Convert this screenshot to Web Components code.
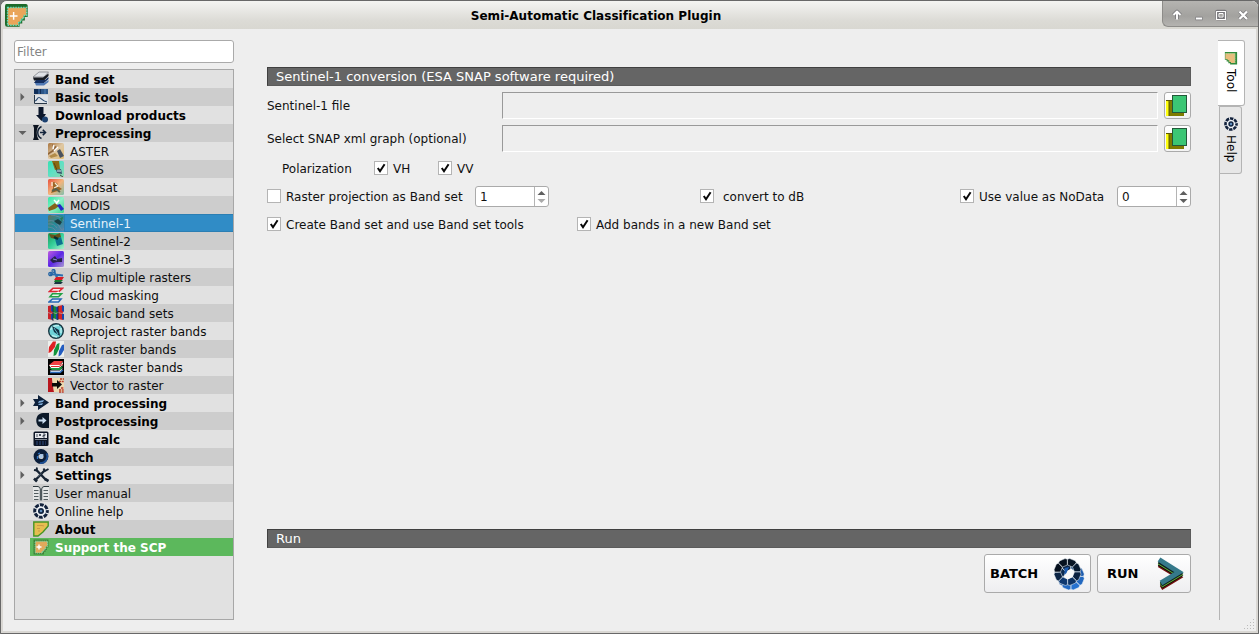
<!DOCTYPE html>
<html lang="en">
<head>
<meta charset="utf-8">
<title>Semi-Automatic Classification Plugin</title>
<style>
html,body{margin:0;height:100%;overflow:hidden;background:#777}
body{font:12px "DejaVu Sans",sans-serif;color:#111}
.content{display:grid;grid-template-columns:220px 924px 28px;column-gap:33px;padding:11px 0 0 10px}
.content scp-tabs{margin-left:-6px}
.side{display:flex;flex-direction:column;gap:6px}
.main{display:flex;flex-direction:column;height:553px;padding-top:27px;box-sizing:border-box}
.pol{display:grid;grid-template-columns:92px 64px auto;padding-left:15px;height:20px;margin-top:6px;line-height:22px}
.opts{display:grid;grid-template-columns:208px 225px 260px 157px 74px;height:21px;margin-top:8px}
.opts2{display:grid;grid-template-columns:310px auto;height:20px;margin-top:7px}
.grow{flex:1}
.actions{display:flex;justify-content:flex-end;gap:6px;margin-top:6px}
</style>
</head>
<body>
<scp-window heading="Semi-Automatic Classification Plugin">
  <div class="content">
    <div class="side">
      <scp-filter></scp-filter>
      <scp-tree>
        <scp-item icon="bandset" bold>Band set</scp-item>
        <scp-item icon="basic" bold fold="closed">Basic tools</scp-item>
        <scp-item icon="download" bold>Download products</scp-item>
        <scp-item icon="pre" bold fold="open">Preprocessing</scp-item>
        <scp-item icon="aster" child>ASTER</scp-item>
        <scp-item icon="goes" child>GOES</scp-item>
        <scp-item icon="landsat" child>Landsat</scp-item>
        <scp-item icon="modis" child>MODIS</scp-item>
        <scp-item icon="s1" child selected>Sentinel-1</scp-item>
        <scp-item icon="s2" child>Sentinel-2</scp-item>
        <scp-item icon="s3" child>Sentinel-3</scp-item>
        <scp-item icon="clip" child>Clip multiple rasters</scp-item>
        <scp-item icon="cloud" child>Cloud masking</scp-item>
        <scp-item icon="mosaic" child>Mosaic band sets</scp-item>
        <scp-item icon="reproject" child>Reproject raster bands</scp-item>
        <scp-item icon="split" child>Split raster bands</scp-item>
        <scp-item icon="stack" child>Stack raster bands</scp-item>
        <scp-item icon="vector" child>Vector to raster</scp-item>
        <scp-item icon="bandproc" bold fold="closed">Band processing</scp-item>
        <scp-item icon="post" bold fold="closed">Postprocessing</scp-item>
        <scp-item icon="calc" bold>Band calc</scp-item>
        <scp-item icon="batch" bold>Batch</scp-item>
        <scp-item icon="settings" bold fold="closed">Settings</scp-item>
        <scp-item icon="manual">User manual</scp-item>
        <scp-item icon="help">Online help</scp-item>
        <scp-item icon="about" bold>About</scp-item>
        <scp-item icon="scp" bold support>Support the SCP</scp-item>
      </scp-tree>
    </div>
    <div class="main">
      <scp-heading>Sentinel-1 conversion (ESA SNAP software required)</scp-heading>
      <scp-file>Sentinel-1 file</scp-file>
      <scp-file>Select SNAP xml graph (optional)</scp-file>
      <div class="pol"><span>Polarization</span><scp-check checked>VH</scp-check><scp-check checked>VV</scp-check></div>
      <div class="opts">
        <scp-check>Raster projection as Band set</scp-check>
        <scp-spin value="1" at-min></scp-spin>
        <scp-check checked style="--gap:9px">convert to dB</scp-check>
        <scp-check checked>Use value as NoData</scp-check>
        <scp-spin value="0"></scp-spin>
      </div>
      <div class="opts2"><scp-check checked>Create Band set and use Band set tools</scp-check><scp-check checked>Add bands in a new Band set</scp-check></div>
      <div class="grow"></div>
      <scp-heading>Run</scp-heading>
      <div class="actions">
        <scp-button icon="batchBig" style="--w:107px;--pl:5px;--pr:5px">BATCH</scp-button>
        <scp-button icon="run" style="--w:94px;--pl:9px;--pr:5px">RUN</scp-button>
      </div>
    </div>
    <scp-tabs></scp-tabs>
  </div>
</scp-window>
<script>
const blob = (id, a, b, c) => `<defs><linearGradient id="${id}" x1="0" y1="0" x2="1" y2="1"><stop offset="0" stop-color="${a}"/><stop offset=".5" stop-color="${b}"/><stop offset="1" stop-color="${c}"/></linearGradient></defs><rect width="16" height="16" rx="1.500" fill="url(#${id})"/>`;
const ICONS = {
  scp: `<path d="M.5 .5H15.500V8.500H14V11H12.500V13H11V15.500H.5z" fill="#3f8236"/><path d="M2.200 2.200H14.500V7.500H12.800V10H11.200V12H9.500V14H2.200z" fill="#dfa95c" stroke="#78dcae" stroke-dasharray="1.300 .8"/><path d="M3.500 8H8.500M6 5.500V10.500" stroke="#fff" stroke-width="1.400"/>`,
  scpTitle: `<path d="M1 0H14.500Q16 0 15.800 2V9H13.800V11.500H12V13.500H10.200V15.800H1.500Q0 15.800 0 14V1.500Q0 0 1 0z" fill="#1d6a2a"/><path d="M1.800 2.400H15V8H13V10.300H11.200V12.400H9.500V14.800H1.800z" fill="#eaa55a" stroke="#5fe0c0" stroke-dasharray="1 .8"/><path d="M3.300 8.300H8.700M6 5.600V11" stroke="#fff" stroke-width="1"/>`,
  scpTab: `<path d="M1 1H15V15.500H7V14H5V12H3V10H1z" fill="#318b3c"/><path d="M1.500 2.500H12.800V13.800H8V12.500H6V10.500H4V9H1.500z" fill="#e8bd7d"/><path d="M2 3H12.500V13.500" fill="none" stroke="#8fdca0" stroke-width=".9" stroke-dasharray="1.500 1"/>`,
  bandset: `<path d="M6 1H15.500L11 6H0z" fill="#dfe2e6" stroke="#808389" stroke-width=".8"/><path d="M0 6.500H10L15.500 2.500V5L11 9.500H1z" fill="#171b22"/><path d="M3 9H12L15.500 6V8L11 12H1z" fill="#152f60"/><path d="M2 12H11L15.500 9V11L11 14.500H3z" fill="#5079b5"/>`,
  basic: `<rect x="1" y="0" width="14" height="5" fill="#112e58"/><path d="M6 0V5M9 0V5M12 0V5" stroke="#487db8"/><path d="M10 0H15V5H10z" fill="#487db8" opacity=".5"/><path d="M1 6H15V15H1z" fill="#dfe3e8"/><path d="M1.500 6V14.500H14" fill="none" stroke="#2a3848"/><path d="M2 12C4 12 4 8.500 6 8.500S9 12 14 13" fill="none" stroke="#29496f" stroke-width="1.200"/>`,
  download: `<path d="M5.500 0H10.500V7H13L8.500 14L3 8H5.500z" fill="#0c172b"/><circle cx="12" cy="12.500" r="3" fill="#1c4170"/>`,
  pre: `<path d="M0 0H6C3 4 3 11 6 15H0L1 12V3z" fill="#0c1420"/><path d="M8.500 1.500C3.500 4 3.500 11 8.500 13.500" fill="none" stroke="#0f1f34" stroke-width="1.400"/><path d="M7 7.500H12M9.800 4.800L12.500 7.500L9.800 10.200" fill="none" stroke="#12233b" stroke-width="1.600"/>`,
  aster: blob('as','#a7733c','#dfc8a4','#e3bd72') + `<path d="M4 1L9 4L8 7L3 10L0 12V10L6 6z" fill="#7d5126" opacity=".8"/><path d="M6 2L5 6M10 4L6 8" stroke="#fff" stroke-width="1.500"/><path d="M1 13L7 10L10 13L3 15z" fill="#b28b48"/><path d="M9 8L12 6L16 13L12 15z" fill="#4b535f"/>`,
  goes: blob('go','#35e0b0','#60e0c4','#8fd6ac') + `<path d="M4 0H11L12 8L7 9z" fill="#8b6a13"/><path d="M6 2L9 9" stroke="#5a4712"/><path d="M8 9L13 8L14 13L9 12z" fill="#37536b"/><path d="M9 10H13" stroke="#e5edf2"/><path d="M12 14L15 16" stroke="#444"/>`,
  landsat: blob('la','#e84f3c','#f3b47b','#82c0ad') + `<path d="M5 3L9 4L11 8L14 10L10 12L3 14L5 9z" fill="#9c6525"/><path d="M7 4L10 7L6 9M4 3V7" stroke="#f1ead6" stroke-width="1.300" fill="none"/><path d="M4 12L8 10L12 13" stroke="#59604c" stroke-width="2" fill="none"/>`,
  modis: blob('mo','#2ee8a5','#8ff0c8','#37d68c') + `<path d="M0 11L7 6L11 9L7 12L1 14z" fill="#866319"/><path d="M6 3L9 6M11 3L8 7" stroke="#fff" stroke-width="1.500" fill="none"/><path d="M9 8L12 7L16 12L13 14z" fill="#2629c7"/>`,
  s1: blob('s1','#66735b','#238b98','#5b82ab') + `<path d="M0 6Q7 4 11 11T16 13M0 9Q6 8 9 13M0 12Q6 12 8 16M3 0Q13 1 16 6" stroke="#6b8aa3" fill="none" opacity=".8"/><path d="M6 6L10 4L14 7L12 10L8 8z" fill="#1b3f42"/><path d="M12 3L15 2L14 7" fill="#2a7b55"/>`,
  s2: blob('s2','#1c9753','#34cf9b','#a8f0cc') + `<path d="M1 1L7 2L12 0L13 4L8 6L3 5z" fill="#66521b"/><path d="M7 6L13 4L15 11L9 13z" fill="#0c718f"/><path d="M6 4L10 6" stroke="#052f2e" stroke-width="2.500"/>`,
  s3: blob('s3','#c05ce0','#5b27e5','#a99bd1') + `<path d="M2 9L7 5L9 8L14 7V11L9 11L5 12z" fill="#27234c"/><path d="M5 8L9 9" stroke="#8b8bd8"/>`,
  clip: `<path d="M2 5L15 6.500M6 1L8 7L11 10" stroke="#2c6eae" stroke-width="1.800" fill="none"/><circle cx="2.500" cy="5" r="1.700" fill="none" stroke="#2364a3" stroke-width="1.300"/><circle cx="5.500" cy="2" r="1.500" fill="none" stroke="#2364a3" stroke-width="1.200"/><path d="M8 8H16L14 11H6z" fill="#d71d25"/><path d="M7 11H15L13 13H6z" fill="#167a2e"/><path d="M7 13H15L13 15H6z" fill="#193540"/>`,
  cloud: `<g fill="none" stroke-width="1.600"><path d="M5 1.200H14.500L11 4.500H1.500z" stroke="#dc2633" fill="#f8e8e8"/><path d="M11 5L7 8" stroke="#fff" stroke-width="2"/><path d="M4.500 6.700H13.500L10.500 9.800H2z" stroke="#23a247" fill="#e8f4e9"/><path d="M4.500 12H13L10.500 15H1z" stroke="#2868b5" fill="#e3ecf6"/></g>`,
  mosaic: `<path d="M0 1L5 0V15L0 14z" fill="#c92128"/><path d="M5 1L10 2V15L5 13z" fill="#14863b"/><path d="M10 1L15 0V15L10 14z" fill="#d22228"/><path d="M3 0H5V7L3 6zM8 2H10V7L8 6zM14 0L16 1V7L14 6zM3 9H5V15L3 14zM8 9H10V15L8 14zM14 9H16V15L14 14z" fill="#1746ad"/><path d="M0 7.500L3 8.500L5 7.500L8 8.500L10 7.500L14 8.500L16 7.500" fill="none" stroke="#b8b2b2" stroke-width=".7"/><path d="M5 0V16M10 1V15" stroke="#23212d" stroke-width=".8"/>`,
  reproject: `<circle cx="8" cy="8" r="7.300" fill="#6ed2d8" stroke="#173641" stroke-width="1.400"/><path d="M2.500 7Q5 2 11 2.500M4 12.500Q6 13 9 14M13 5V10" fill="none" stroke="#b8eeee" stroke-width="1.500"/><path d="M4 3L11 7L12 13L6 9z" fill="#102e42"/><path d="M6 5L10 11" stroke="#65bbcc"/>`,
  split: `<rect width="16" height="16" fill="#ecefec"/><path d="M5 .5H8L7 6L3 11L.5 12L1 6z" fill="#df2224"/><path d="M9 3L11.500 2L11 8L8 14L5.500 15L6 9z" fill="#13943c"/><path d="M14 4L16 3.500V9L13 14L10.500 15.500L11 10z" fill="#225cc0"/>`,
  stack: `<rect width="16" height="16" fill="#000"/><path d="M6 2H15L12 6H1z" fill="#f04244"/><path d="M1 6H12L15 3V6L11 9H3z" fill="#fff"/><path d="M3 7.500H11L15 5" fill="none" stroke="#e02a2c"/><path d="M1 9H11L15 7L13 11H4z" fill="#1e9742"/><path d="M2 11.500H12L15 9L12 14H3z" fill="#e8f2ff"/><path d="M2 13.500H12L15 11" stroke="#2b69b9" fill="none" stroke-width="1.500"/>`,
  vector: `<path d="M0 1H4L6 15H0z" fill="#b8161d"/><path d="M4 1H16V15H6z" fill="#ecd9b0"/><path d="M12 2H16M11 4.500H16M13 11H16M11 13H16M11 15H16" stroke="#ba3c2c" stroke-width="1.500" stroke-dasharray="2 .7"/><path d="M4 6H9V3L14 7.500L9 12V9.500H4z" fill="#090909"/>`,
  bandproc: `<path d="M0 4H5V0L16 7.500L5 15V11H0L2 7.500z" fill="#0d203a"/><path d="M6 6L11 5L10 7L5 8zM5 9L10 8L9 10L6 10z" fill="#80addb"/>`,
  post: `<path d="M16 0V15H10C1 15 1 0 10 0z" fill="#0b1929"/><path d="M5.500 6.500H9.500V4L13.500 7.500L9.500 11V8.500H5.500z" fill="#cbdef1"/>`,
  calc: `<rect x=".5" y=".5" width="15" height="14.500" rx="1.500" fill="#0c1425"/><rect x="2" y="2" width="12" height="5" fill="#e8eaef"/><path d="M4 3V6M6 3L8 5M8 3L6 5M10 3H12V4.500H10V6H12" stroke="#222b3b" stroke-width=".8" fill="none"/><path d="M2 8.500H14" stroke="#d6dbe3" stroke-width=".6"/><path d="M3 11H13M3 13H13" stroke="#2f4a80" stroke-dasharray="2 1"/>`,
  batch: `<circle cx="8" cy="7.500" r="5" fill="none" stroke="#0b1e3a" stroke-width="4.800"/><path d="M13.500 4.500A6.500 6.500 0 0 1 7 14" fill="none" stroke="#1d5096" stroke-width="1.800"/><path d="M5 5L7 4M4.500 7V10" stroke="#2f74c4" stroke-width="1.300"/><path d="M7 5.500L10.500 5L9.500 8.500L6.500 9.500z" fill="#a8c8ea"/>`,
  settings: `<path d="M3 2.500L13 13M12 3L3 12.500" stroke="#162333" stroke-width="2.400"/><path d="M1 3L3.500 3.500L4 .5M10.500 1.500L12 4L15.500 2" fill="none" stroke="#162333" stroke-width="1.900"/><path d="M1 11.500L4 14.500M12 12L15.500 14" stroke="#162333" stroke-width="2.600"/><path d="M4.500 10L8 6.500" stroke="#8493a2" stroke-width=".7"/>`,
  manual: `<path d="M0 1H5L8 3L11 1H16V15H11L8 16L5 15H0z" fill="#e4e6e6"/><path d="M0 1.500H5Q7.300 2 7.300 4V15.500M16 1.500H11Q8.700 2 8.700 4V15.500" stroke="#2c383d" fill="none"/><path d="M1 5.500H5.500M1 8.500H5.500M1 11.500H5.500M1 14.500H5.500M10.500 5.500H15M10.500 8.500H15M10.500 11.500H15M10.500 14.500H15" stroke="#535d60"/>`,
  help: `<circle cx="8" cy="8" r="7.400" fill="#eef1f5"/><circle cx="8" cy="8" r="6.300" fill="none" stroke="#12213b" stroke-width="3" stroke-dasharray="3.900 1.048" stroke-dashoffset="1.950"/><circle cx="8" cy="8" r="2.200" fill="#5f8cbc" stroke="#10233f" stroke-width="1.700"/>`,
  about: `<path d="M.8 1H15.200V5L10 11L5 15H.8z" fill="#e6be50" stroke="#479524" stroke-width="1.400"/><path d="M4 4.500H9L11 5M4 7.500H7M5 10H7" stroke="#cc9a45" fill="none"/>`,
};
class ScpIcon extends HTMLElement {
  connectedCallback() {
    this.attachShadow({mode:'open'}).innerHTML = `<style>:host{display:block;width:var(--size,16px);height:var(--size,16px);flex:none}svg{display:block;width:100%;height:100%}</style><svg viewBox="0 0 16 16">${ICONS[this.getAttribute('name')]||''}</svg>`;
  }
}
customElements.define('scp-icon', ScpIcon);

const define = (name, render) => customElements.define(name, class extends HTMLElement {
  constructor(){ super(); this.attachShadow({mode:'open'}); }
  connectedCallback(){ this.shadowRoot.innerHTML = render(this); }
});

define('scp-window', el => `<style>
:host{display:block;box-sizing:border-box;width:1259px;height:634px;border:1px solid #686868;border-radius:7px 7px 0 0;background:#eee;overflow:hidden;box-shadow:inset 2px 0 #d9d7d3,inset -2px 0 #d9d7d3,inset 0 -2px #d9d7d3;position:relative}
header{height:28px;display:flex;background:linear-gradient(#f4f4f2,#dcdbd6 70%,#d8d7d1);box-sizing:border-box}
.logo{width:29px;padding:3px 0 0 4px;box-sizing:border-box}
h1{flex:1;margin:0;font:bold 12px/30px "DejaVu Sans",sans-serif;text-align:center;color:#000;letter-spacing:.03px}
.ctl{width:96px;height:26px;box-sizing:border-box;background:linear-gradient(#b5b4b1,#a3a29f 60%,#b4b3b0);border:1px solid #8d8c89;border-width:0 0 1px 1px;border-radius:0 0 0 6px}
.ctl svg{display:block}
.inner{padding:0 3px}
.grip{position:absolute;right:3px;bottom:3px}
</style><header><div class="logo"><scp-icon name="scpTitle" style="--size:23px"></scp-icon></div><h1>${el.getAttribute('heading')}</h1>
<div class="ctl"><svg width="95" height="26" fill="none" stroke="#77767a" stroke-width="3.600" stroke-linejoin="round"><path d="M14 18V11M10.500 14L14 10.500L17.500 14"/><path d="M32.500 17.500H39.500"/><path d="M54 10.500H62V17.500H54z"/><path d="M76.500 10.500L84 18M84 10.500L76.500 18"/><g stroke="#fff" stroke-width="1.900"><path d="M14 18.500V11M10.500 14L14 10.500L17.500 14"/><path d="M33 17.500H39"/><path d="M53.500 10.500H62.500V18.500H53.500z" stroke-width="1.200"/><path d="M56 12.500H60V16H56z" stroke-width="1"/><path d="M76.500 10.500L84 18M84 10.500L76.500 18" stroke-width="2.300"/></g><path d="M56.500 13.500H59.500V15.500H56.500z" fill="#a7a6a3" stroke="none"/></svg></div></header>
<div class="inner"><slot></slot></div>
<svg class="grip" width="11" height="11" fill="#bbb"><path d="M9 0h1v1h-1zM6 3h1v1h-1zM9 3h1v1h-1zM3 6h1v1h-1zM6 6h1v1h-1zM9 6h1v1h-1zM0 9h1v1h-1zM3 9h1v1h-1zM6 9h1v1h-1zM9 9h1v1h-1z"/></svg>`);

define('scp-filter', () => `<style>:host{display:block;box-sizing:border-box;height:23px;border:1px solid #aaa;border-radius:3px;background:#fff;color:#858585;line-height:23px;padding-left:2px}</style>Filter`);

define('scp-tree', () => `<style>:host{display:block;box-sizing:border-box;height:551px;border:1px solid #a7a7a7;background:#e1e1e1}::slotted(:nth-child(even)){background:#cdcdcd}</style><slot></slot>`);

define('scp-item', el => {
  const fold = el.getAttribute('fold');
  return `<style>
:host{display:flex;height:18px;box-sizing:border-box;line-height:20px;color:#0e0e0e;white-space:nowrap}
:host([bold]){font-weight:bold;color:#000}
:host([selected]){background:#308cc6!important;color:#e6f2fa}
.fold{width:15px;height:18px;flex:none}
.row{flex:1;display:flex;align-items:center;padding-left:3px}
:host([child]) .row{padding-left:18px}
:host([support]) .row{background:#5cb85c;color:#fff}
:host([selected]) .t{box-shadow:inset 1px 0 #2b7eb3,inset 0 1px #2b7eb3,inset 0 -1px #2b7eb3}
.t{flex:1;padding-left:6px;height:18px}
svg{display:block}
</style><div class="fold">${fold ? `<svg width="15" height="18"><path d="${fold==='open'?'M3.500 7H11.500L7.500 11z':'M5.500 5L9.500 9L5.500 13z'}" fill="#606060"/></svg>`:''}</div>
<div class="row"><scp-icon name="${el.getAttribute('icon')}"></scp-icon><div class="t"><slot></slot></div></div>`;
});

define('scp-heading', () => `<style>:host{display:block;box-sizing:border-box;height:19px;flex:none;background:#656565;border:1px solid #5b5b5b;border-top-color:#404040;border-left-color:#404040;color:#fff;font-size:13px;line-height:17px;padding-left:8px}</style><slot></slot>`);

define('scp-file', () => `<style>
:host{display:grid;grid-template-columns:235px 656px 27px;grid-template-rows:27px;height:27px;margin-top:6px;flex:none;line-height:29px}
.in{border:1px solid;border-color:#999 #fff #fff #999;box-sizing:border-box}
.btn{margin-left:6px;width:27px;height:27px;box-sizing:border-box;border:1px solid #aaa;border-radius:3px;background:linear-gradient(#fff,#f3f3f3)}
svg{display:block}
</style><span><slot></slot></span><div class="in"></div><div class="btn"><svg width="25" height="25"><path d="M1 7H8V23H1z" fill="#ffff12"/><path d="M1 7L4 9V23H19V20H8V7z" fill="#7f7b00"/><path d="M1 7.500H8M4 9V23" stroke="#5b5900"/><rect x="7.500" y="2.500" width="14" height="17" fill="#3bc674" stroke="#24583a"/></svg></div>`);

define('scp-check', el => `<style>
:host{display:flex;height:20px;line-height:22px;align-items:flex-start;white-space:nowrap}
.box{width:14px;height:14px;margin:3px var(--gap,5px) 0 0;box-sizing:border-box;border:1px solid #b4b4b4;background:#fff;flex:none}
svg{display:block}
</style><span class="box">${el.hasAttribute('checked')?'<svg width="12" height="12"><path d="M2.800 6L5 9.200L9.600 2.300" fill="none" stroke="#080808" stroke-width="2"/></svg>':''}</span><span><slot></slot></span>`);

define('scp-spin', el => `<style>
:host{display:flex;width:74px;height:21px;box-sizing:border-box;border:1px solid #aaa;border-radius:3px;background:#fff;line-height:21px}
span{flex:1;padding-left:4px;height:19px}
.a{width:13px;border-left:1px solid #b4b4b4}
svg{display:block}
</style><span>${el.getAttribute('value')}</span><div class="a"><svg width="13" height="19"><path d="M2.500 8L6.500 4L10.500 8z" fill="#5f5f5f"/><path d="M2.500 12L6.500 16L10.500 12z" fill="${el.hasAttribute('at-min')?'#aaa':'#5f5f5f'}"/></svg></div>`);

// Extruded ring: a brighter layer of blocks, offset down and right, under a darker one.
function ring() {
  const lower = ['#17497f','#1d5cae','#2268c0','#2672cf','#2269c2','#1b549c','#0d2b50','#0c2445'];
  const upper = ['#081524','#071a30','#0a2140','#0e3466','#0f3970','#0b2444','#050f1c','#06111f'];
  const layer = (colors, x, y) => colors.map((c, i) =>
    `<path d="M-4.800 -11.800L-3 -13.300H3L4.800 -11.800L2.600 -6.500H-2.600z" fill="${c}" stroke="#e8eef5" stroke-width=".5" transform="translate(${x} ${y}) rotate(${i * 45 + 22})"/>`).join('');
  return layer(lower, 17.800, 19.500) + layer(upper, 14.500, 15)
    + '<path d="M12.500 15L18.500 11.500L21 14L19.500 20L14.500 22.500L11.500 20z" fill="#f8f8f9"/><path d="M11.500 11L16 10L13.500 16L11.500 18z" fill="#1d5cb0"/>';
}
define('scp-button', el => `<style>
:host{display:flex;align-items:center;justify-content:space-between;box-sizing:border-box;width:var(--w);height:39px;padding:0 var(--pr) 0 var(--pl);border:1px solid #aaa;border-radius:3px;background:linear-gradient(#fff,#eeeef0);font-weight:bold;font-size:13px;color:#000}
svg{display:block}
</style><span><slot></slot></span>${el.getAttribute('icon')==='run'
 ? '<svg width="28" height="35"><g fill="none" stroke-width="4.500"><path d="M2 9L22 21.200L4 32" stroke="#76120f"/><path d="M2 7.500L22 19.800L4 30.500" stroke="#0b0b0b"/><path d="M2 6.300L22 18.800L4 29.500" stroke="#6db536"/><path d="M2 5.300L22 17.800L4 28.500" stroke="#0b1f20"/><path d="M2 3.500L22 16.200L4 27" stroke="#35798a" stroke-width="5"/></g></svg>'
 : `<svg width="32" height="34">${ring()}</svg>`}`);

define('scp-tabs', () => `<style>
:host{display:block;width:28px;height:580px;background:linear-gradient(#b5b5b5,#b5b5b5) 1px 0/1px 580px no-repeat}
.tab{box-sizing:border-box;border:1px solid #b4b4b4;border-left:0;border-radius:0 3px 3px 0;display:flex;flex-direction:column;align-items:center;gap:4px;color:#000}
.tab span{writing-mode:vertical-rl;line-height:14px}
.on{width:27px;height:66px;background:#fff;padding:10px 0 0 0}
.off{width:23px;height:68px;margin-left:1px;border-left:1px solid #b5b5b5;background:#e7e7e7;padding:10px 0 0 0}
</style><div class="tab on"><scp-icon name="scpTab" style="--size:14px"></scp-icon><span>Tool</span></div><div class="tab off"><scp-icon name="help" style="--size:14px"></scp-icon><span>Help</span></div>`);
</script>
</body>
</html>
